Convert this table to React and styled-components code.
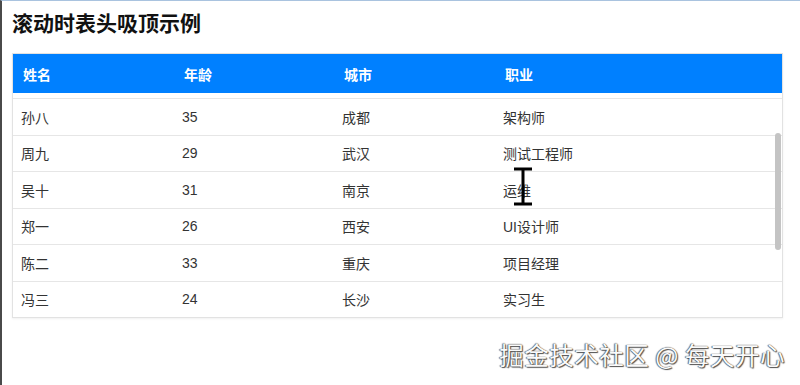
import React, { useLayoutEffect, useRef } from "react";
import styled, { createGlobalStyle } from "styled-components";

const GlobalStyle = createGlobalStyle`
    html, body { margin: 0; padding: 0; background: #fff; }
    body {
        font-family: "Liberation Sans", "Noto Sans CJK SC", sans-serif;
        border-top: 1px solid #a9c3df;
        border-left: 2px solid #4a4a4a;
        box-sizing: border-box;
    }
`;

const Page = styled.div`
    position: relative;
    height: 384px;
    padding: 9px 17px 0 10px;
    box-sizing: border-box;
    overflow: hidden;
`;

const Title = styled.h2`
    margin: 0 0 18px;
    font-size: 21px;
    line-height: 25px;
    font-weight: 700;
    color: #111;
    font-family: "Noto Sans CJK SC", sans-serif;
`;

const Card = styled.div`
    position: relative;
    border: 1px solid #e2e2e2;
    box-shadow: 0 1px 2px rgba(0, 0, 0, 0.06);
`;

// real scroll area, native bar hidden (reference shows an overlay bar)
const ScrollArea = styled.div`
    height: 263px;
    overflow-y: auto;
    scrollbar-width: none;
    &::-webkit-scrollbar { display: none; }
`;

const Table = styled.table`
    width: 100%;
    border-collapse: collapse;
    table-layout: fixed;
    font-size: 14px;
`;

const Th = styled.th`
    position: sticky;
    top: 0;
    background: #0080ff;
    color: #fff;
    text-align: left;
    font-weight: 700;
    height: 39px;
    padding: 0 10px;
    box-sizing: border-box;
    font-family: "Noto Sans CJK SC", sans-serif;
`;

const Td = styled.td`
    height: 36.5px;
    padding: 0 8px;
    box-sizing: border-box;
    color: #333;
    border-bottom: 1px solid #e6e6e6;
`;

const Thumb = styled.div`
    position: absolute;
    right: 1px;
    top: 79px;
    width: 6px;
    height: 117px;
    border-radius: 3px;
    background: #c4c4c4;
`;

const Watermark = styled.div`
    position: absolute;
    right: 15px;
    bottom: 13px;
    font-size: 24.5px;
    letter-spacing: 0.5px;
    color: #fafafa;
    font-family: "Noto Sans CJK SC", sans-serif;
    text-shadow: 0 0 1px #222, 1px 1px 1px #555, -1px 0 1px #888;
`;

const Cursor = styled.svg`
    position: absolute;
    left: 509px;
    top: 165px;
`;

const rows = [
    ["张三", 25, "北京", "前端工程师"],
    ["李四", 30, "上海", "后端工程师"],
    ["王五", 28, "广州", "产品经理"],
    ["赵六", 32, "深圳", "设计师"],
    ["钱七", 27, "杭州", "数据分析师"],
    ["孙八", 35, "成都", "架构师"],
    ["周九", 29, "武汉", "测试工程师"],
    ["吴十", 31, "南京", "运维"],
    ["郑一", 26, "西安", "UI设计师"],
    ["陈二", 33, "重庆", "项目经理"],
    ["冯三", 24, "长沙", "实习生"],
    ["褚四", 36, "天津", "技术总监"],
    ["卫五", 28, "苏州", "全栈工程师"],
    ["蒋六", 30, "厦门", "运营"],
    ["沈七", 27, "青岛", "算法工程师"],
];

const App = () => {
    const scrollRef = useRef(null);

    useLayoutEffect(() => {
        if (scrollRef.current) scrollRef.current.scrollTop = 177;
    }, []);

    return (
        <>
            <GlobalStyle />
            <Page>
                <Title>滚动时表头吸顶示例</Title>
                <Card>
                    <ScrollArea ref={scrollRef}>
                        <Table>
                            <colgroup>
                                <col style={{ width: 161 }} />
                                <col style={{ width: 160 }} />
                                <col style={{ width: 161 }} />
                                <col />
                            </colgroup>
                            <thead>
                                <tr>
                                    <Th>姓名</Th>
                                    <Th>年龄</Th>
                                    <Th>城市</Th>
                                    <Th>职业</Th>
                                </tr>
                            </thead>
                            <tbody>
                                {rows.map((r) => (
                                    <tr key={r[0]}>
                                        {r.map((c, i) => (
                                            <Td key={i}>{c}</Td>
                                        ))}
                                    </tr>
                                ))}
                            </tbody>
                        </Table>
                    </ScrollArea>
                    <Thumb />
                </Card>
                <Cursor width="24" height="42" viewBox="0 0 24 42">
                    <path d="M3 3h18M3 38h18M12 3v35" stroke="#000" strokeWidth="3" fill="none" />
                </Cursor>
                <Watermark>掘金技术社区 @ 每天开心</Watermark>
            </Page>
        </>
    );
};

export default App;
